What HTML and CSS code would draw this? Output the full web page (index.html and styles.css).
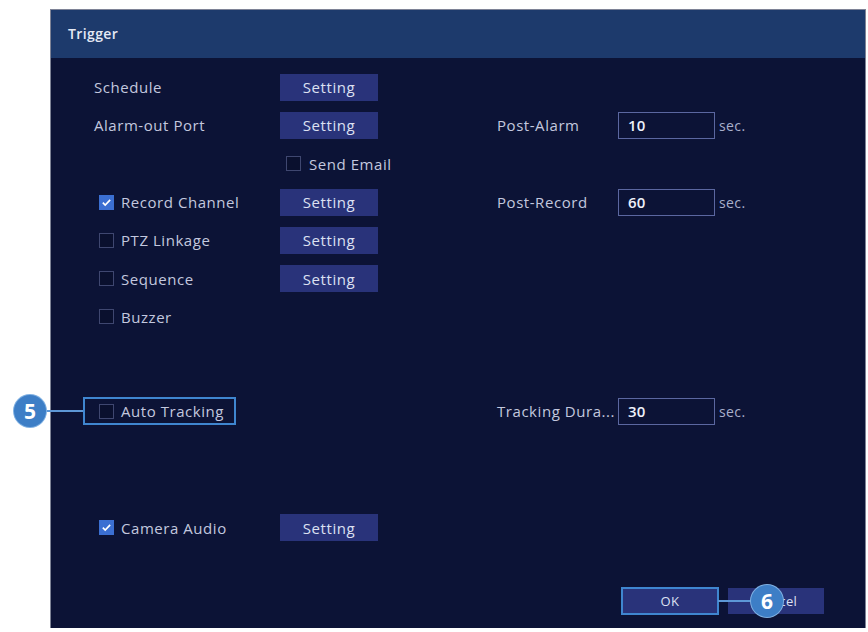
FILE: index.html
```html
<!DOCTYPE html>
<html lang="en">
<head>
  <meta charset="UTF-8" />
  <meta name="viewport" content="width=device-width, initial-scale=1" />
  <link rel="stylesheet" href="styles.css">
</head>
<body>

  <div class="dialog">
    <div class="dialog-head">Trigger</div>

    <div class="dialog-body">
      <div class="group">
        <div class="row">
          <span class="label">Schedule</span>
          <span><button class="btn">Setting</button></span>
        </div>
        <div class="row">
          <span class="label">Alarm-out Port</span>
          <span><button class="btn">Setting</button></span>
          <span class="label">Post-Alarm</span>
          <span class="field">10</span>
          <span class="unit">sec.</span>
        </div>
        <div class="row">
          <span></span>
          <label class="check sub"><span class="box"></span>Send Email</label>
        </div>
        <div class="row">
          <label class="check"><span class="box on"></span>Record Channel</label>
          <span><button class="btn">Setting</button></span>
          <span class="label">Post-Record</span>
          <span class="field">60</span>
          <span class="unit">sec.</span>
        </div>
        <div class="row">
          <label class="check"><span class="box"></span>PTZ Linkage</label>
          <span><button class="btn">Setting</button></span>
        </div>
        <div class="row">
          <label class="check"><span class="box"></span>Sequence</label>
          <span><button class="btn">Setting</button></span>
        </div>
        <div class="row">
          <label class="check"><span class="box"></span>Buzzer</label>
        </div>
      </div>

      <div class="group tracking">
        <div class="row">
          <span>
            <label class="check hl">
              <span class="box"></span>Auto Tracking
              <span class="callout-line left"></span>
              <span class="callout left">5</span>
            </label>
          </span>
          <span></span>
          <span class="label">Tracking Dura...</span>
          <span class="field">30</span>
          <span class="unit">sec.</span>
        </div>
      </div>

      <div class="group audio">
        <div class="row">
          <label class="check"><span class="box on"></span>Camera Audio</label>
          <span><button class="btn">Setting</button></span>
        </div>
      </div>
    </div>

    <div class="dialog-foot">
      <button class="btn foot hl">OK
        <span class="callout-line right"></span>
      </button>
      <button class="btn foot">Cancel</button>
      <span class="callout right">6</span>
    </div>
  </div>

</body>
</html>
```

FILE: styles.css
```css
html, body {
  margin: 0;
  padding: 0;
  background: #ffffff;
  font-family: "Open Sans", "Noto Sans", sans-serif;
}

.dialog {
  position: relative;
  width: 814px;
  height: 618px;
  margin: 10px 0 0 51px;
  display: flex;
  flex-direction: column;
  background: #0c1336;
  box-shadow: 0 0 0 1px rgba(40, 48, 80, 0.6);
  color: #c3c8df;
  font-size: 15px;
  letter-spacing: 0.55px;
}

.dialog-head {
  height: 48px;
  line-height: 48px;
  padding-left: 17px;
  background: #1d3a6c;
  color: #e4e9f4;
  font-size: 14px;
  font-weight: 600;
  letter-spacing: 0.4px;
}

.dialog-body {
  flex: 1;
  padding: 10px 0 0 43px;
}

.group.tracking { margin-top: 56px; }
.group.audio    { margin-top: 78px; }

.row {
  height: 38.3px;
  display: grid;
  grid-template-columns: 186px 217px 121px 101px auto;
  align-items: center;
}

.label { white-space: nowrap; }

.btn {
  width: 98px;
  height: 27px;
  padding: 0;
  border: 0;
  background: #29337a;
  color: #dde1f2;
  font-family: inherit;
  font-size: 15px;
  letter-spacing: 0.6px;
}

.check {
  display: flex;
  align-items: center;
  gap: 7px;
  margin-left: 5px;
  white-space: nowrap;
}

.check.sub {
  margin-left: 6px;
  gap: 8px;
}

.box {
  width: 13px;
  height: 13px;
  border: 1px solid #3f4770;
  background: #0a102e;
  flex: none;
}

.box.on {
  border-color: #3b6fd2;
  background: #3b6fd2 no-repeat center / 11px 11px
    url("data:image/svg+xml,%3Csvg xmlns='http://www.w3.org/2000/svg' viewBox='0 0 12 12'%3E%3Cpath d='M2 6.2l2.6 2.6L10 3.2' fill='none' stroke='white' stroke-width='1.8'/%3E%3C/svg%3E");
}

.field {
  box-sizing: border-box;
  width: 97px;
  height: 27px;
  line-height: 25px;
  padding-left: 9px;
  border: 1px solid #5b67a0;
  color: #eef1fa;
  font-weight: 600;
  letter-spacing: 0.2px;
}

.unit {
  color: #a9afcb;
  font-size: 14px;
  letter-spacing: 0.4px;
}

/* highlighted controls with numbered callouts */
.hl {
  position: relative;
  outline: 2px solid #3f86d0;
}

.check.hl {
  margin-left: -9px;
  width: 135px;
  height: 24px;
  padding-left: 14px;
}

.callout {
  position: absolute;
  width: 32px;
  height: 32px;
  border-radius: 50%;
  background: #3d7ec6;
  box-shadow: 0 0 0 1px #7fb0e2;
  color: #ffffff;
  font-size: 21px;
  font-weight: 700;
  line-height: 32px;
  text-align: center;
  letter-spacing: 0;
}

.callout.left { left: -71px; top: -4px; }

.callout-line {
  position: absolute;
  height: 2px;
  background: #5d97d6;
}

.callout-line.left { left: -39px; width: 37px; top: 11px; }

.dialog-foot {
  position: relative;
  display: flex;
  justify-content: flex-end;
  gap: 10px;
  padding: 0 41px 14px 0;
}

.btn.foot {
  width: 96px;
  height: 26px;
  font-size: 13px;
  letter-spacing: 0.4px;
}

.btn.foot.hl { outline-offset: -1px; }

.callout-line.right { left: 96px; width: 36px; top: 12px; }

.callout.right { right: 82px; top: -3px; }
```
